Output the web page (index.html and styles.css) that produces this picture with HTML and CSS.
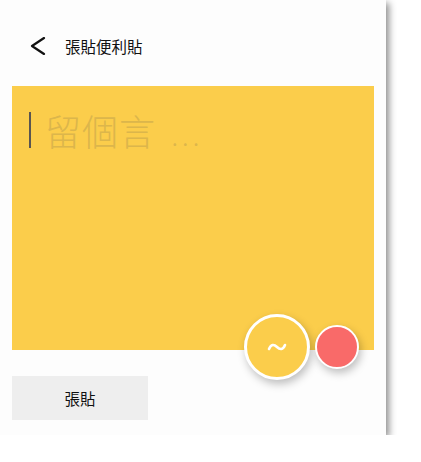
FILE: index.html
```html
<!DOCTYPE html>
<html lang="zh-Hant">
<head>
<meta charset="utf-8">
<link rel="stylesheet" href="styles.css">
</head>
<body>
<div class="panel">
  <header class="bar">
    <svg class="back" width="16" height="18" viewBox="0 0 16 18"><path d="M14 1 L2 9 L14 17" fill="none" stroke="#111" stroke-width="2.2" stroke-linecap="round" stroke-linejoin="round"/></svg>
    <span class="title">張貼便利貼</span>
  </header>
  <div class="note">
    <div class="input"><span class="caret"></span><span class="ph">留個言</span><span class="dots">...</span></div>
    <div class="swatch yellow"><svg width="20" height="12" viewBox="0 0 20 12"><path d="M2 8 C4 3 7 3 10 6 C13 9 16 9 18 4" fill="none" stroke="#fff" stroke-width="2.6" stroke-linecap="round"/></svg></div>
    <div class="swatch red"></div>
  </div>
  <div class="actions">
    <button class="post">張貼</button>
  </div>
</div>
</body>
</html>
```
FILE: styles.css
```css
html, body { margin: 0; padding: 0; background: #fff; }
body { font-family: "Noto Sans CJK TC", "Noto Sans", sans-serif; }
.panel {
  width: 386px;
  height: 435px;
  background: #fdfdfd;
  box-shadow: 3px 3px 7px rgba(0,0,0,0.45);
  position: relative;
}
.bar {
  height: 86px;
  display: flex;
  align-items: center;
  padding-left: 30px;
  box-sizing: border-box;
  padding-top: 6px;
}
.back { display: block; }
.title {
  margin-left: 19px;
  font-size: 15.5px;
  color: #111;
}
.note {
  margin: 0 12px;
  height: 264px;
  background: #fbcd4b;
  position: relative;
}
.input {
  display: flex;
  align-items: center;
  padding: 24px 0 0 17px;
}
.caret {
  width: 2px;
  height: 36px;
  background: #5a5550;
}
.ph {
  margin-left: 14px;
  font-size: 36px;
  font-weight: 300;
  letter-spacing: 1px;
  color: #dcb64b;
  line-height: 40px;
}
.dots {
  margin-left: 16px;
  font-size: 20px;
  letter-spacing: 5px;
  color: #dcb64b;
  align-self: flex-end;
  line-height: 20px;
  padding-bottom: 2px;
}
.swatch {
  position: absolute;
  border-radius: 50%;
  box-sizing: border-box;
  border: 3px solid #fff;
  box-shadow: 2px 4px 8px rgba(0,0,0,0.25);
}
.yellow {
  left: 232px;
  top: 228px;
  width: 66px;
  height: 66px;
  background: #fbcd4b;
  display: flex;
  align-items: center;
  justify-content: center;
}
.yellow svg { display: block; }
.red {
  left: 303px;
  top: 239px;
  width: 44px;
  height: 44px;
  border-width: 2px;
  background: #f96a69;
}
.actions { padding: 26px 12px 0; }
.post {
  width: 136px;
  height: 44px;
  border: none;
  background: #eee;
  font-family: inherit;
  font-size: 15.5px;
  color: #111;
  padding: 0;
}
```
